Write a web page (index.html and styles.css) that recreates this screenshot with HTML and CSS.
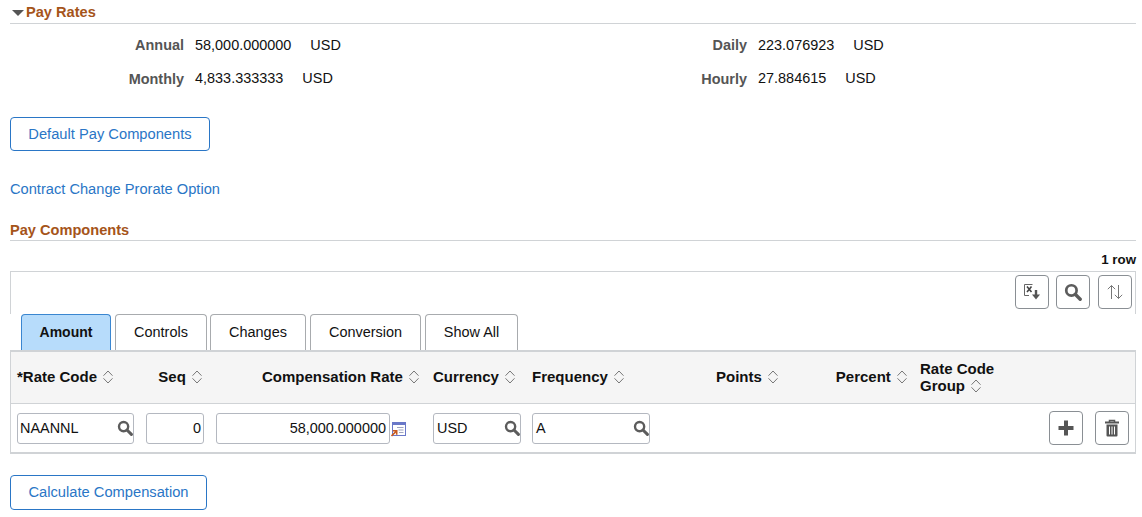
FILE: index.html
```html
<!DOCTYPE html>
<html lang="en">
<head>
<meta charset="utf-8">
<title>Pay Rates</title>
<link rel="stylesheet" href="styles.css">
</head>
<body>
<svg class="defs" width="0" height="0" aria-hidden="true">
  <symbol id="sort" viewBox="0 0 12 14"><path d="M1.500 5.700 6 1 10.500 5.700M1.500 8.300 6 13 10.500 8.300" fill="none" stroke="#777" stroke-width="1"/></symbol>
  <symbol id="glass" viewBox="0 0 16 16"><circle cx="6.600" cy="6.600" r="4.600" fill="none" stroke="#5c5c5c" stroke-width="2.400"/><path d="M10 10 14.400 14.400" stroke="#5c5c5c" stroke-width="3" stroke-linecap="round"/></symbol>
</svg>
<header class="section-head">
  <span class="caret"></span><h2 class="section-title">Pay Rates</h2>
</header>
<section class="rates">
  <div class="rate"><span class="rate-label">Annual</span><span class="rate-value">58,000.000000</span><span class="rate-cur">USD</span></div>
  <div class="rate"><span class="rate-label">Daily</span><span class="rate-value">223.076923</span><span class="rate-cur">USD</span></div>
  <div class="rate"><span class="rate-label rate-label-low">Monthly</span><span class="rate-value">4,833.333333</span><span class="rate-cur">USD</span></div>
  <div class="rate"><span class="rate-label rate-label-low">Hourly</span><span class="rate-value">27.884615</span><span class="rate-cur">USD</span></div>
</section>
<button class="btn btn-default">Default Pay Components</button>
<a class="link" href="#">Contract Change Prorate Option</a>
<header class="section-head section-head-pc">
  <h2 class="section-title">Pay Components</h2>
</header>
<div class="row-count">1 row</div>
<div class="toolbar">
  <button class="icon-btn" aria-label="Download">
    <svg width="20" height="20" viewBox="0 0 20 20"><path d="M10.500 2.500H2.500V13.500H7" fill="none" stroke="#666" stroke-width="1"/><path d="M5 4.500 9.500 10M9.500 4.500 5 10" stroke="#444" stroke-width="1.600"/><path d="M14 8V13" stroke="#555" stroke-width="2.400"/><path d="M10 12.500H18L14 17.500Z" fill="#555"/></svg>
  </button>
  <button class="icon-btn" aria-label="Find"><svg width="18" height="18"><use href="#glass"/></svg></button>
  <button class="icon-btn icon-btn-last" aria-label="Sort">
    <svg width="20" height="20" viewBox="0 0 20 20"><path d="M6.500 17V3.500M2.800 7.200 6.500 3.500 10.200 7.200M13.500 3V16.500M9.800 12.800 13.500 16.500 17.200 12.800" fill="none" stroke="#777" stroke-width="1"/></svg>
  </button>
</div>
<nav class="tabs">
  <a class="tab tab-active tab-amount">Amount</a>
  <a class="tab tab-controls">Controls</a>
  <a class="tab tab-changes">Changes</a>
  <a class="tab tab-conversion">Conversion</a>
  <a class="tab tab-showall">Show All</a>
</nav>
<div class="grid">
  <div class="grid-head">
    <div class="th">*Rate Code <svg class="sort"><use href="#sort"/></svg></div>
    <div class="th th-right th-seq">Seq <svg class="sort"><use href="#sort"/></svg></div>
    <div class="th th-right th-comp">Compensation Rate <svg class="sort"><use href="#sort"/></svg></div>
    <div class="th">Currency <svg class="sort"><use href="#sort"/></svg></div>
    <div class="th">Frequency <svg class="sort"><use href="#sort"/></svg></div>
    <div class="th th-right">Points <svg class="sort"><use href="#sort"/></svg></div>
    <div class="th th-right th-pct">Percent <svg class="sort"><use href="#sort"/></svg></div>
    <div class="th">Rate Code<br>Group <svg class="sort"><use href="#sort"/></svg></div>
    <div></div>
  </div>
  <div class="grid-row">
    <div class="field field-code">NAANNL<svg class="glass"><use href="#glass"/></svg></div>
    <div class="field field-seq">0</div>
    <div class="comp">
      <div class="field field-comp">58,000.000000</div>
      <svg class="cal" width="15" height="15" viewBox="0 0 15 15"><rect x="1.500" y=".5" width="13" height="13" fill="#fff" stroke="#6a78c8"/><rect x="1.500" y=".5" width="13" height="2.500" fill="#6a78c8"/><path d="M6 5.500H12.500M7.500 8H12.500M8 10.500H12.500" stroke="#a0a4c0" stroke-width="1.200"/><path d="M.5 14 5 9.500M1.800 8.800H5.700V12.700" fill="none" stroke="#c8591e" stroke-width="1.600"/></svg>
    </div>
    <div class="field field-cur">USD<svg class="glass"><use href="#glass"/></svg></div>
    <div class="field field-freq">A<svg class="glass"><use href="#glass"/></svg></div>
    <div></div><div></div><div></div>
    <div class="actions">
      <button class="icon-btn" aria-label="Add"><svg width="20" height="20" viewBox="0 0 20 20"><path d="M10 2.500V17.500M2.500 10H17.500" stroke="#555" stroke-width="4"/></svg></button>
      <button class="icon-btn" aria-label="Delete"><svg width="16" height="18" viewBox="0 0 16 18"><path d="M1 3.500H15" stroke="#555" stroke-width="2"/><path d="M5.500 3V1.500H10.500V3" fill="none" stroke="#555" stroke-width="1.500"/><path d="M2.500 5.500H13.500V16.500Q13.500 17.500 12.500 17.500H3.500Q2.500 17.500 2.500 16.500Z" fill="#555"/><path d="M5.500 7.500V15.500M8 7.500V15.500M10.500 7.500V15.500" stroke="#fff" stroke-width="1"/></svg></button>
    </div>
  </div>
</div>
<button class="btn btn-calc">Calculate Compensation</button>
</body>
</html>
```
FILE: styles.css
```css
html, body { margin: 0; padding: 0; }
body {
  width: 1142px;
  height: 517px;
  overflow: hidden;
  font-family: "Liberation Sans", Arial, sans-serif;
  font-size: 14.45px;
  color: #111;
  background: #fff;
}
.defs { display: block; height: 0; }
.section-head {
  display: flex;
  align-items: center;
  margin: 0 6px 0 10px;
  height: 24px;
  box-sizing: border-box;
  border-bottom: 1px solid #d0d3d6;
}
.section-head-pc { margin-top: 22px; height: 22px; }
.caret {
  width: 0;
  height: 0;
  margin: 3px 2px 0 2px;
  border-left: 6px solid transparent;
  border-right: 6px solid transparent;
  border-top: 6px solid #555;
}
.section-title {
  margin: 0;
  font-size: 14.6px;
  font-weight: bold;
  color: #a5541a;
}
.rates {
  display: grid;
  grid-template-columns: 563px 1fr;
  grid-auto-rows: 33px;
  padding-top: 4px;
}
.rate { display: flex; align-items: center; height: 33px; }
.rate-label {
  width: 184px;
  text-align: right;
  font-weight: bold;
  color: #555;
  margin-right: 11px;
}
.rate-label-low { padding-top: 2px; }
.rate-value { margin-right: 19px; }
.btn {
  display: block;
  background: #fff;
  border: 1px solid #2a76c6;
  border-radius: 4px;
  color: #2a76c6;
  font: 14.7px "Liberation Sans", Arial, sans-serif;
  padding: 0;
  margin-left: 10px;
}
.btn-default { width: 200px; height: 34px; margin-top: 23px; }
.btn-calc { width: 197px; height: 35px; margin-top: 21px; padding-bottom: 2px; }
.link {
  display: block;
  margin: 30px 0 0 10px;
  color: #2a76c6;
  text-decoration: none;
  line-height: 16px;
  font-size: 14.65px;
}
.row-count {
  text-align: right;
  font-size: 13.3px;
  font-weight: bold;
  padding-right: 6px;
  line-height: 16px;
  margin-top: 11px;
}
.toolbar {
  display: flex;
  justify-content: flex-end;
  gap: 7px;
  margin: 3px 6px 0 10px;
  padding: 3px 3px 0 0;
  height: 39px;
  border-top: 1px solid #d0d3d6;
  border-left: 1px solid #d0d3d6;
  border-right: 1px solid #d0d3d6;
}
.icon-btn {
  display: flex;
  align-items: center;
  justify-content: center;
  width: 34px;
  height: 34px;
  padding: 0;
  background: #fff;
  border: 1px solid #8a8f94;
  border-radius: 4px;
}
.icon-btn-last { margin-left: 1px; }
.tabs {
  display: flex;
  padding-left: 21px;
  height: 36px;
  box-sizing: border-box;
}
.tab {
  display: flex;
  align-items: center;
  justify-content: center;
  box-sizing: border-box;
  height: 36px;
  padding-bottom: 2px;
  background: #fff;
  border: 1px solid #a8abae;
  border-bottom: 0;
  border-radius: 4px 4px 0 0;
  margin-right: 4px;
}
.tab-amount { width: 90px; }
.tab-controls { width: 92px; margin-right: 3px; }
.tab-changes { width: 96px; }
.tab-conversion { width: 111px; }
.tab-showall { width: 93px; }
.tab-active {
  background: #b7dcfb;
  border-color: #3a86d0;
  font-weight: bold;
  font-size: 14px;
}
.grid {
  margin: 0 6px 0 10px;
  border: 2px solid #d0d3d6;
  border-left-width: 1px;
  border-right-width: 1px;
}
.grid-head, .grid-row {
  display: grid;
  grid-template-columns: 129px 70px 217px 99px 123px 130px 135px 120px 1fr;
  align-items: center;
  padding-left: 6px;
}
.grid-head {
  height: 52px;
  box-sizing: border-box;
  padding-bottom: 2px;
  background: #f5f5f5;
  border-bottom: 1px solid #d0d3d6;
  font-weight: bold;
  font-size: 15px;
  line-height: 17px;
}
.grid-row { height: 48px; }
.th { white-space: nowrap; }
.th-right { text-align: right; padding-right: 6px; }
.th-seq { padding-right: 13px; }
.th-comp { padding-right: 13px; }
.th-pct { padding-right: 12px; }
.sort {
  width: 12px;
  height: 14px;
  vertical-align: -2px;
  margin-left: 1px;
}
.field {
  display: flex;
  align-items: center;
  justify-content: space-between;
  box-sizing: border-box;
  height: 31px;
  background: #fff;
  border: 1px solid #b4b8c0;
  border-radius: 3px;
  padding: 0 0 0 2px;
}
.glass { width: 16px; height: 16px; }
.field-code { width: 117px; }
.field-seq { width: 58px; justify-content: flex-end; padding-right: 2px; }
.comp { display: flex; align-items: center; gap: 1px; }
.field-comp { width: 174px; justify-content: flex-end; padding-right: 3px; }
.field-cur { width: 88px; padding-left: 3px; }
.field-freq { width: 118px; padding-left: 3px; }
.cal { margin-top: 3px; }
.actions {
  display: flex;
  justify-content: flex-end;
  gap: 12px;
  padding-right: 6px;
}
```
